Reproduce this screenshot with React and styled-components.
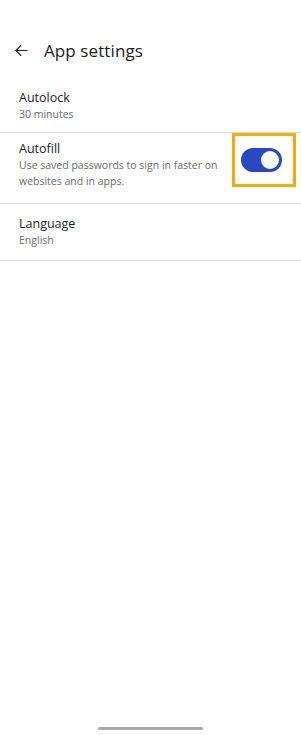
import React, { useState } from 'react'
import styled, { createGlobalStyle } from 'styled-components'

const Global = createGlobalStyle`
  body {
    margin: 0;
    background: #fff;
    font-family: 'Open Sans', 'Noto Sans', sans-serif;
    color: #1c1c1e;
  }
`

const Screen = styled.div`
  width: 301px;
  height: 735px;
  display: flex;
  flex-direction: column;
  position: relative;
  overflow: hidden;
`

const Header = styled.div`
  display: flex;
  align-items: center;
  height: 24px;
  margin-top: 38px;
  padding-left: 14px;
  gap: 15px;
`

const Title = styled.h1`
  margin: 0;
  font-size: 17px;
  font-weight: 400;
  letter-spacing: 0.1px;
`

const List = styled.div`
  margin-top: 23px;
  display: flex;
  flex-direction: column;
`

const Row = styled.div`
  display: flex;
  align-items: ${p => p.$top ? 'flex-start' : 'center'};
  padding: ${p => p.$pad || '0 19px'};
  min-height: ${p => p.$h}px;
  border-bottom: 1px solid #dcdcdc;
  box-sizing: border-box;
`

const Texts = styled.div`
  flex: 1;
  display: flex;
  flex-direction: column;
  padding-top: ${p => p.$pt || 0}px;
`

const Label = styled.div`
  font-size: 12.5px;
  line-height: 16px;
`

const Sub = styled.div`
  font-size: 10.5px;
  line-height: 16px;
  color: #6b6b6b;
  max-width: 205px;
`

const Highlight = styled.div`
  border: 3.5px solid #f9a90c;
  width: 64px;
  height: 54px;
  box-sizing: border-box;
  display: flex;
  align-items: center;
  justify-content: flex-start;
  padding-left: 5.5px;
  margin-right: -14px;
`

const Track = styled.button`
  width: 41px;
  height: 24px;
  border-radius: 12px;
  border: none;
  padding: 0 3px;
  background: ${p => (p.$on ? '#2a47c4' : '#9a9a9a')};
  display: flex;
  align-items: center;
  justify-content: ${p => (p.$on ? 'flex-end' : 'flex-start')};
  cursor: pointer;
`

const Thumb = styled.span`
  width: 18px;
  height: 18px;
  border-radius: 50%;
  background: #fff;
`

const HomeBar = styled.div`
  position: absolute;
  left: 98px;
  bottom: 5px;
  width: 105px;
  height: 3px;
  border-radius: 2px;
  background: #a8a8a8;
`

export default function App() {
  const [on, setOn] = useState(true)
  return (
    <Screen>
      <Global />
      <Header>
        <svg width="15" height="15" viewBox="0 0 24 24" fill="none" stroke="#222" strokeWidth="1.8" strokeLinecap="round" strokeLinejoin="round">
          <path d="M21 12H3" />
          <path d="M11 4l-8 8 8 8" />
        </svg>
        <Title>App settings</Title>
      </Header>
      <List>
        <Row $h={48} $pad="0 19px 6px">
          <Texts>
            <Label>Autolock</Label>
            <Sub>30 minutes</Sub>
          </Texts>
        </Row>
        <Row $h={71} $top>
          <Texts $pt={8}>
            <Label>Autofill</Label>
            <Sub>Use saved passwords to sign in faster on websites and in apps.</Sub>
          </Texts>
          <Highlight>
            <Track $on={on} onClick={() => setOn(!on)}>
              <Thumb />
            </Track>
          </Highlight>
        </Row>
        <Row $h={57}>
          <Texts>
            <Label>Language</Label>
            <Sub>English</Sub>
          </Texts>
        </Row>
      </List>
      <HomeBar />
    </Screen>
  )
}
